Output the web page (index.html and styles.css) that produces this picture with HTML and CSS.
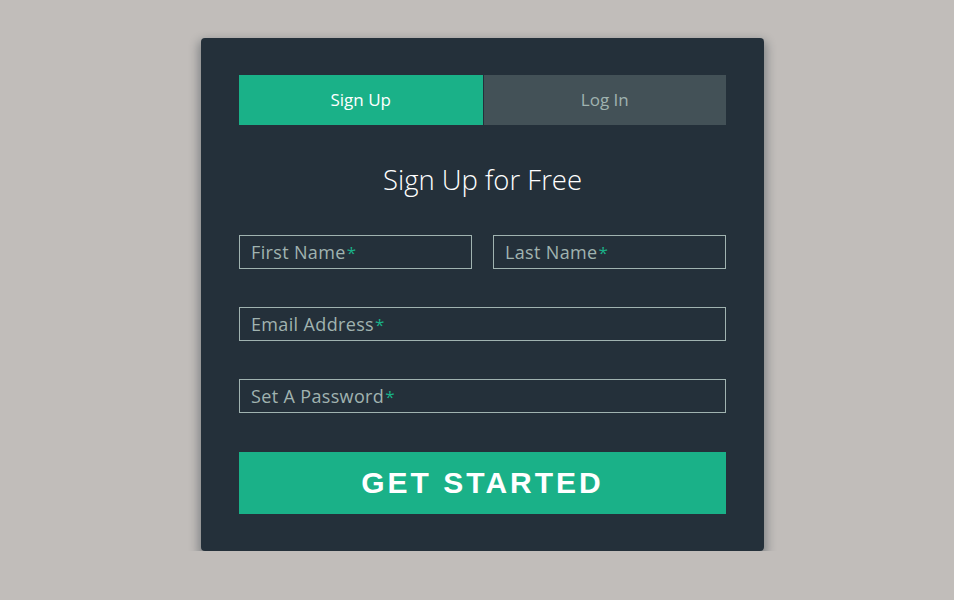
FILE: index.html
```html
<!DOCTYPE html>
<html lang="en">
<head>
  <meta charset="UTF-8">
  <meta name="viewport" content="width=device-width, initial-scale=1.0">
  <title>Sign Up for Free</title>
  <link rel="stylesheet" href="styles.css">
</head>
<body>
  <div class="form">
    <ul class="tab-group">
      <li class="tab active"><a href="#signup">Sign Up</a></li>
      <li class="tab"><a href="#login">Log In</a></li>
    </ul>

    <div class="tab-content" id="signup">
      <h1>Sign Up for Free</h1>

      <form action="/" method="post">
        <div class="top-row">
          <div class="field-wrap">
            <label>First Name<span class="req">*</span></label>
            <input type="text" required autocomplete="off">
          </div>
          <div class="field-wrap">
            <label>Last Name<span class="req">*</span></label>
            <input type="text" required autocomplete="off">
          </div>
        </div>

        <div class="field-wrap">
          <label>Email Address<span class="req">*</span></label>
          <input type="email" required autocomplete="off">
        </div>

        <div class="field-wrap">
          <label>Set A Password<span class="req">*</span></label>
          <input type="password" required autocomplete="off">
        </div>

        <button type="submit" class="button">Get Started</button>
      </form>
    </div>
  </div>
</body>
</html>
```

FILE: styles.css
```css
/* Base styles */
* {
  box-sizing: border-box;
}

body {
  margin: 0;
  padding: 38px 0 0;
  background: #c1bdba;
  font-family: "Open Sans", "Noto Sans", sans-serif;
}

a {
  text-decoration: none;
}

/* Card */
.form {
  width: 563px;
  margin: 0 0 0 201px;
  padding: 37px 38px;
  background: #24303a;
  border-radius: 4px;
  box-shadow: 0 5px 10px 3px rgba(19, 35, 47, 0.35);
}

/* Tabs */
.tab-group {
  display: flex;
  list-style: none;
  margin: 0 0 36px;
  padding: 0;
}

.tab {
  flex: 1;
}

.tab a {
  display: block;
  height: 50px;
  line-height: 50px;
  text-align: center;
  font-size: 17px;
  color: #a0b3b0;
  background: rgba(160, 179, 176, 0.25);
}

.tab.active a {
  background: #1ab188;
  color: #ffffff;
}

.tab + .tab a {
  margin-left: 1px;
}

/* Heading */
h1 {
  margin: 0 0 36px;
  text-align: center;
  color: #ffffff;
  font-weight: 300;
  font-size: 27.5px;
  line-height: 38px;
}

/* Fields */
.top-row {
  display: flex;
  gap: 21px;
}

.top-row .field-wrap {
  flex: 1;
}

.field-wrap {
  position: relative;
  margin-bottom: 38px;
}

.field-wrap label {
  position: absolute;
  left: 12px;
  top: 0;
  line-height: 34px;
  font-size: 18px;
  letter-spacing: 0.35px;
  color: #a0b3b0;
  pointer-events: none;
}

.req {
  margin-left: 1px;
  font-size: 17px;
  color: #1ab188;
}

input {
  display: block;
  width: 100%;
  height: 34px;
  padding: 5px 10px;
  background: none;
  border: 1px solid #a0b3b0;
  border-radius: 0;
  color: #ffffff;
  font-size: 18px;
  font-family: inherit;
}

/* Button */
.button {
  display: block;
  width: 100%;
  height: 62px;
  margin-top: 39px;
  padding: 0;
  border: 0;
  background: #1ab188;
  color: #ffffff;
  font-family: "Liberation Sans", Arial, sans-serif;
  font-weight: 700;
  font-size: 30px;
  letter-spacing: 3px;
  text-transform: uppercase;
}
```
